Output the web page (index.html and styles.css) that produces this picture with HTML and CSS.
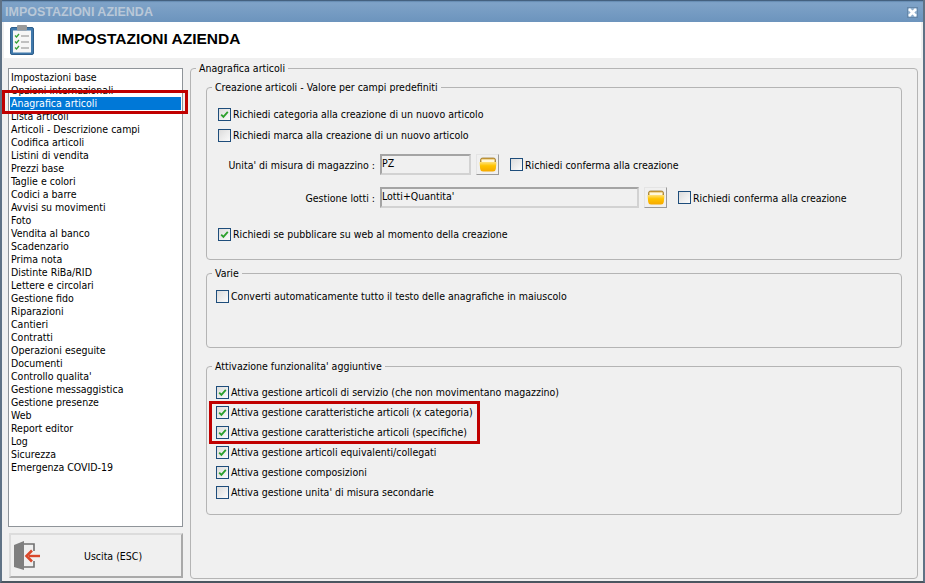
FILE: index.html
```html
<!DOCTYPE html>
<html lang="it">
<head>
<meta charset="utf-8">
<title>Impostazioni azienda</title>
<link rel="stylesheet" href="styles.css">
</head>
<body>
<svg class="defs" width="0" height="0" aria-hidden="true">
  <defs>
    <linearGradient id="fold" x1="0" y1="0" x2="0" y2="1">
      <stop offset="0" stop-color="#ffe27a"/><stop offset=".4" stop-color="#ffc400"/><stop offset="1" stop-color="#f5a800"/>
    </linearGradient>
    <symbol id="folder" viewBox="0 0 18 15">
      <path d="M1.5 5 V3 Q1.5 1 3.5 1 H14.5 Q16.5 1 16.5 3 V5 Z" fill="#d9a638" stroke="#9a7a30" stroke-width=".8"/>
      <rect x="2.5" y="2.4" width="13" height="2.6" fill="#fff8dc"/>
      <path d="M.5 5 H17.5 L16.8 12 Q16.6 14.5 14 14.5 H4 Q1.4 14.5 1.2 12 Z" fill="url(#fold)"/>
    </symbol>
    <symbol id="tick" viewBox="0 0 13 13">
      <path d="M2.6 6.6 L5.2 9.4 L10.4 3.4" fill="none" stroke="#2ca02c" stroke-width="2.1"/>
    </symbol>
  </defs>
</svg>

<div class="window">
  <div class="titlebar">
    <span class="titlebar-text">IMPOSTAZIONI AZIENDA</span>
    <span class="close">
      <svg width="9" height="9" viewBox="0 0 9 9"><path d="M1 1 L8 8 M8 1 L1 8" stroke="#fff" stroke-width="2.6"/></svg>
    </span>
  </div>

  <header class="header">
    <svg class="clip" width="24" height="30" viewBox="0 0 24 30">
      <rect x=".5" y="2.5" width="23" height="27" rx="1.5" fill="#3f78ab" stroke="#2f5f8c"/>
      <rect x="3" y="5.5" width="18" height="22" fill="#f6f6f6"/>
      <rect x="7" y="0" width="10" height="5.5" rx="1" fill="#9a9a9a"/>
      <path d="M5 10.5 l1.5 1.5 l2.5 -3 M5 16.5 l1.5 1.5 l2.5 -3 M5 22.5 l1.5 1.5 l2.5 -3" fill="none" stroke="#35a035" stroke-width="1.3"/>
      <path d="M11 11 H19 M11 17 H19 M11 23 H19" stroke="#8a8a8a" stroke-width="1"/>
    </svg>
    <h1 class="heading">IMPOSTAZIONI AZIENDA</h1>
  </header>

  <main class="main">
    <aside class="side">
      <ul class="list">
        <li>Impostazioni base</li>
        <li>Opzioni internazionali</li>
        <li class="sel">Anagrafica articoli</li>
        <li>Lista articoli</li>
        <li>Articoli - Descrizione campi</li>
        <li>Codifica articoli</li>
        <li>Listini di vendita</li>
        <li>Prezzi base</li>
        <li>Taglie e colori</li>
        <li>Codici a barre</li>
        <li>Avvisi su movimenti</li>
        <li>Foto</li>
        <li>Vendita al banco</li>
        <li>Scadenzario</li>
        <li>Prima nota</li>
        <li>Distinte RiBa/RID</li>
        <li>Lettere e circolari</li>
        <li>Gestione fido</li>
        <li>Riparazioni</li>
        <li>Cantieri</li>
        <li>Contratti</li>
        <li>Operazioni eseguite</li>
        <li>Documenti</li>
        <li>Controllo qualita'</li>
        <li>Gestione messaggistica</li>
        <li>Gestione presenze</li>
        <li>Web</li>
        <li>Report editor</li>
        <li>Log</li>
        <li>Sicurezza</li>
        <li>Emergenza COVID-19</li>
      </ul>
      <button class="exit" type="button">
        <svg class="exit-icon" width="28" height="31" viewBox="0 0 28 31">
          <path d="M9 4 H21 V11 M21 21 V27 H9" fill="none" stroke="#707070" stroke-width="1.6"/>
          <path d="M1 5 L11 1 V30 L1 27 Z" fill="#7f7f7f"/>
          <path d="M27 16 H16" stroke="#d9482b" stroke-width="2.4"/>
          <path d="M19 10.5 L13.5 16 L19 21.5" fill="none" stroke="#d9482b" stroke-width="2.6"/>
        </svg>
        <span class="exit-text">Uscita (ESC)</span>
      </button>
    </aside>

    <fieldset class="group outer">
      <legend>Anagrafica articoli</legend>

      <fieldset class="group g1">
        <legend>Creazione articoli - Valore per campi predefiniti</legend>
        <label class="row r1"><span class="cb on"><svg><use href="#tick"/></svg></span>Richiedi categoria alla creazione di un nuovo articolo</label>
        <label class="row r2"><span class="cb"></span>Richiedi marca alla creazione di un nuovo articolo</label>
        <div class="field-row fr1">
          <span class="field-label">Unita' di misura di magazzino :</span>
          <span class="input short">PZ</span>
          <button class="pick" type="button"><svg width="18" height="15"><use href="#folder"/></svg></button>
          <label class="row inline"><span class="cb"></span>Richiedi conferma alla creazione</label>
        </div>
        <div class="field-row fr2">
          <span class="field-label">Gestione lotti :</span>
          <span class="input long">Lotti+Quantita'</span>
          <button class="pick" type="button"><svg width="18" height="15"><use href="#folder"/></svg></button>
          <label class="row inline"><span class="cb"></span>Richiedi conferma alla creazione</label>
        </div>
        <label class="row r5"><span class="cb on"><svg><use href="#tick"/></svg></span>Richiedi se pubblicare su web al momento della creazione</label>
      </fieldset>

      <fieldset class="group g2">
        <legend>Varie</legend>
        <label class="row"><span class="cb"></span>Converti automaticamente tutto il testo delle anagrafiche in maiuscolo</label>
      </fieldset>

      <fieldset class="group g3">
        <legend>Attivazione funzionalita' aggiuntive</legend>
        <label class="row"><span class="cb on"><svg><use href="#tick"/></svg></span>Attiva gestione articoli di servizio (che non movimentano magazzino)</label>
        <label class="row"><span class="cb on"><svg><use href="#tick"/></svg></span>Attiva gestione caratteristiche articoli (x categoria)</label>
        <label class="row"><span class="cb on"><svg><use href="#tick"/></svg></span>Attiva gestione caratteristiche articoli (specifiche)</label>
        <label class="row"><span class="cb on"><svg><use href="#tick"/></svg></span>Attiva gestione articoli equivalenti/collegati</label>
        <label class="row"><span class="cb on"><svg><use href="#tick"/></svg></span>Attiva gestione composizioni</label>
        <label class="row"><span class="cb"></span>Attiva gestione unita' di misura secondarie</label>
      </fieldset>
    </fieldset>
  </main>

  <div class="mark mark-list"></div>
  <div class="mark mark-opts"></div>
</div>
</body>
</html>
```

FILE: styles.css
```css
* { box-sizing: border-box; }
html, body { margin: 0; padding: 0; }
body { width: 925px; height: 583px; overflow: hidden; font-family: "DejaVu Sans", "Liberation Sans", sans-serif; font-stretch: condensed; font-size: 10.5px; color: #000; background: #f0f0f0; }
.defs { position: absolute; }

.window { position: relative; width: 925px; height: 583px; display: flex; flex-direction: column; background: #f0f0f0; border-left: 2px solid #5f7285; border-right: 2px solid #5f7285; border-bottom: 2px solid #4a5660; }

.titlebar { height: 22px; flex: none; display: flex; align-items: center; justify-content: space-between; padding: 1px 3px 0 3px; background: linear-gradient(#5f86ad 0, #7fa3c8 8%, #6c94bd 100%); border-top: 1px solid #44617f; font-family: "Liberation Sans", sans-serif; font-stretch: normal; }
.titlebar-text { font-size: 12.5px; font-weight: 700; color: #b9c8d8; }
.close { width: 11px; height: 11px; display: flex; align-items: center; justify-content: center; background: #8daccb; border: 1px solid #6587a9; margin-right: 2px; }

.header { height: 36px; flex: none; display: flex; align-items: center; background: #fff; margin: 0 2px; padding-left: 6px; }
.clip { flex: none; }
.heading { margin: -3px 0 0 23px; font-family: "Liberation Sans", sans-serif; font-stretch: normal; font-size: 15.5px; font-weight: 700; line-height: 20px; }

.main { flex: 1; display: flex; padding: 4px 0 0 6px; min-height: 0; }
.side { width: 175px; flex: none; display: flex; flex-direction: column; padding-top: 6px; }
.list { list-style: none; margin: 0; padding: 2px 1px 0 1px; height: 459px; background: #fff; border: 1px solid #8f9499; }
.list li { height: 13px; line-height: 13px; padding-left: 1px; white-space: nowrap; }
.list .sel { background: #0078d7; color: #fff; }

.exit { position: relative; margin: 6px 0 0 1px; width: 174px; height: 45px; padding: 0; font: inherit; color: #000; background: #f0f0f0; border: 2px solid; border-color: #dcdcdc #a9a9a9 #a9a9a9 #dcdcdc; display: flex; align-items: center; }
.exit-icon { margin-left: 2px; flex: none; }
.exit-text { margin-left: 43px; }

.group { margin: 0; min-width: 0; border: 1px solid #b4b4b4; border-radius: 4px; padding: 0; }
.group legend { padding: 0 3px; line-height: 13px; font-size: 10.5px; }
.outer { margin-left: 7px; width: 728px; height: 517px; padding: 6px 15px 0 15px; }
.outer > legend { margin-left: -10px; }
.g1 > legend { margin-left: -6px; }
.g2 > legend, .g3 > legend { margin-left: -4px; }
.g1 { height: 179px; padding: 10px 11px 0; }
.g2 { height: 81px; margin-top: 7px; padding: 6px 9px 0; }
.g3 { height: 155px; margin-top: 12px; padding: 9px 9px 0; }

.row { display: flex; align-items: center; height: 20px; white-space: nowrap; }
.inline { margin-left: 11px; }
.cb { width: 13px; height: 13px; flex: none; margin-right: 2px; border: 1px solid #1e4d7b; background: linear-gradient(135deg, #dcdcdc, #fbfbfb); display: block; }
.cb svg { width: 11px; height: 11px; display: block; }

.r2 { margin-top: 1px; }
.field-row { display: flex; align-items: center; height: 21px; }
.fr1 { margin-top: 9px; }
.fr2 { margin-top: 12px; }
.field-label { width: 157px; text-align: right; flex: none; }
.input { margin-left: 5px; height: 21px; padding: 1px 0 0 0; line-height: 13px; border: 2px solid; border-color: #a4a4a4 #d2d2d2 #d2d2d2 #a4a4a4; flex: none; }
.short { width: 91px; }
.long { width: 259px; }
.pick { margin-left: 5px; width: 23px; height: 21px; padding: 0; flex: none; background: #f0f0f0; border: 1px solid; border-color: #e4e4e4 #9a9a9a #9a9a9a #e4e4e4; display: flex; align-items: center; justify-content: center; }
.r5 { margin-top: 16px; }

.mark { position: absolute; border: 3px solid #c00000; pointer-events: none; }
.mark-list { left: 0; top: 90px; width: 186px; height: 24px; }
.mark-opts { left: 207px; top: 401px; width: 271px; height: 43px; }
```
